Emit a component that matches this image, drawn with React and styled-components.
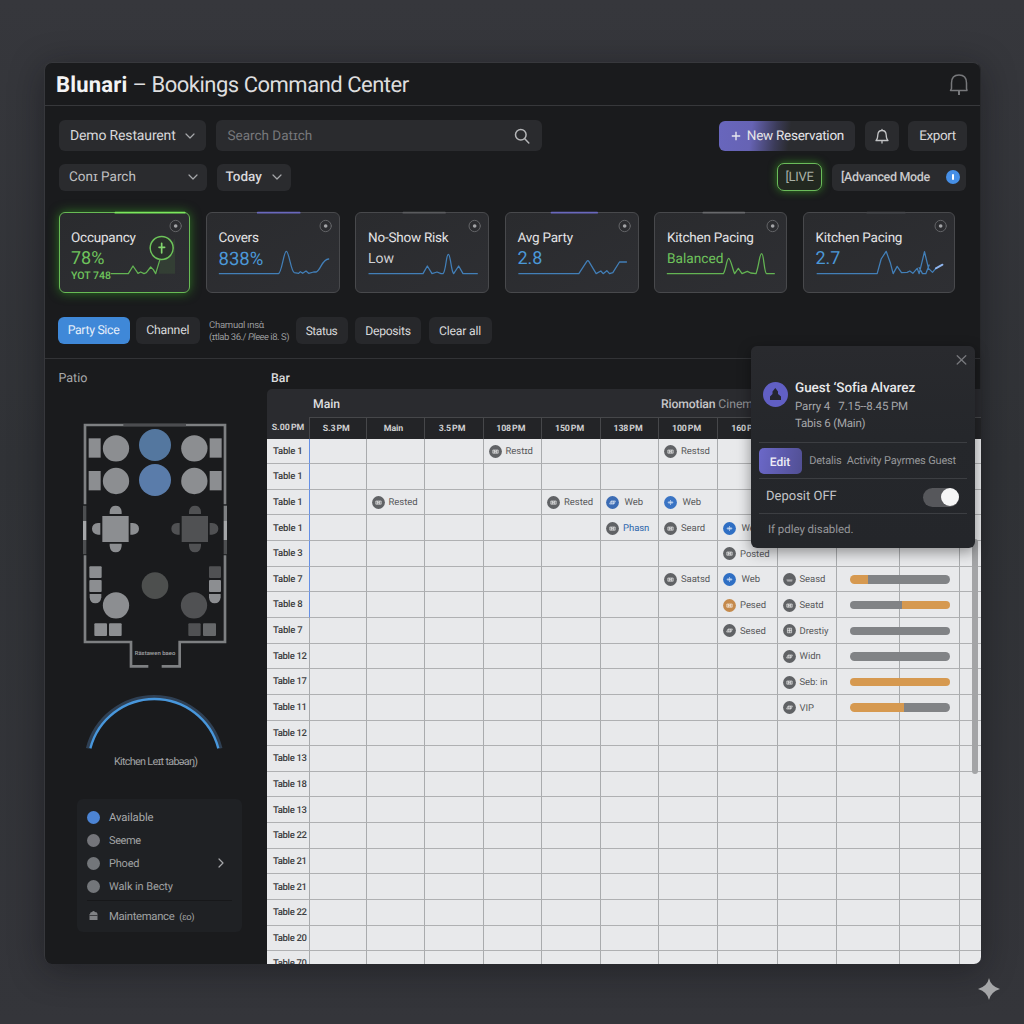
import React from "react";
import styled, { createGlobalStyle, css } from "styled-components";

const Global = createGlobalStyle`
  *, *::before, *::after { box-sizing: border-box; }
  body {
    margin: 0;
    background: linear-gradient(180deg, #36373c 0%, #303236 45%, #34353a 100%);
    font-family: Roboto, "Liberation Sans", sans-serif;
    color: #e6e6e8;
    text-rendering: geometricPrecision;
    -webkit-font-smoothing: antialiased;
  }
  button { text-rendering: inherit; }
`;

const Page = styled.main`
  width: 1024px;
  height: 1024px;
  padding: 62px 43px 60px 44px;
  position: relative;
  overflow: hidden;
`;

const Window = styled.section`
  position: relative;
  width: 937px;
  height: 902px;
  display: flex;
  flex-direction: column;
  background: #1a1b1d;
  border: 1px solid #37383c;
  border-bottom: 0;
  border-right-color: #27282b;
  border-radius: 8px;
  box-shadow: 0 6px 34px rgba(12, 13, 16, 0.42);
`;

const Label = styled.span`
  font-size: ${(p) => p.$size || 14}px;
  font-weight: ${(p) => p.$weight || 400};
  color: ${(p) => p.$color || "#d8d8da"};
  letter-spacing: ${(p) => p.$track || 0}px;
  line-height: 1.2;
  white-space: pre;
`;

const TitleBar = styled.header`
  flex: none;
  height: 43px;
  display: flex;
  align-items: center;
  justify-content: space-between;
  padding: 0 11px 0 11px;
  border-bottom: 1px solid #37383b;
  svg { margin-top: 2px; }
`;

const Title = styled.h1`
  margin: 0;
  padding-top: 3px;
  font-size: 22px;
  font-weight: 400;
  line-height: 28px;
  letter-spacing: ${(p) => p.$track || 0}px;
  color: #dededf;
  white-space: pre;
  b { font-weight: 700; color: #f3f3f4; letter-spacing: 0.2px; }
`;

const Toolbar = styled.div`
  flex: none;
  display: flex;
  justify-content: space-between;
  align-items: center;
  height: ${(p) => p.$h}px;
  margin-top: ${(p) => p.$top}px;
  padding: 0 ${(p) => p.$right}px 0 14px;
`;

const Group = styled.div`
  display: flex;
  align-items: center;
  gap: ${(p) => p.$gap || 9.5}px;
`;

const Control = styled.div`
  display: flex;
  align-items: center;
  justify-content: ${(p) => (p.$center ? "center" : "space-between")};
  width: ${(p) => p.$w}px;
  height: ${(p) => p.$h || 31}px;
  padding: ${(p) => p.$pad || "0 11px"};
  border-radius: 6px;
  background: #2a2b2e;
  ${Label} { padding-top: 1px; }
  ${(p) =>
    p.$primary &&
    css`
      background: linear-gradient(97deg, #6866bd 0%, #6663b4 24%, #3b3b58 42%, #2b2c30 52%, #2b2c30 100%);
    `}
`;

const LiveBadge = styled.div`
  display: flex;
  align-items: center;
  justify-content: center;
  width: 45px;
  height: 28px;
  padding-top: 1px;
  border: 1.5px solid #6bbb5b;
  border-radius: 7px;
  background: #222820;
  box-shadow: 0 0 9px rgba(70, 190, 40, 0.6);
`;

const InfoDot = styled.span`
  display: flex;
  align-items: center;
  justify-content: center;
  width: 14px;
  height: 14px;
  border-radius: 50%;
  background: #468fe6;
  &::after { content: ""; width: 2px; height: 6px; border-radius: 1px; background: #fff; }
`;

const Cards = styled.div`
  flex: none;
  display: grid;
  grid-template-columns: 131px 134px 134px 134px 133px 152px;
  gap: 15.5px;
  margin: 21px 0 0 14px;
  height: 80.5px;
`;

const Card = styled.article`
  position: relative;
  display: flex;
  flex-direction: column;
  align-items: flex-start;
  padding: 17px 11px 0 12px;
  border: 1px solid #48494c;
  border-radius: 6px;
  background: linear-gradient(150deg, #2a2b2e, #2e2f33);
  ${(p) =>
    p.$active &&
    css`
      border: 1.5px solid #68bb55;
      box-shadow: 0 0 11px rgba(60, 175, 40, 0.6);
      padding: 17px 10.5px 0 11px;
    `}
`;

const CardTitle = styled(Label)`
  line-height: 17px;
`;

const CardValue = styled(Label)`
  line-height: 22px;
  margin-top: 1px;
`;

const CardNote = styled(Label)`
  line-height: 12px;
  margin-top: 0;
`;

const CardArt = styled.svg`
  position: absolute;
  left: -1px;
  top: -1px;
  width: ${(p) => p.$w}px;
  height: 81px;
  overflow: visible;
`;

const Filters = styled.div`
  flex: none;
  display: flex;
  align-items: center;
  height: 27px;
  margin: 24.5px 0 0 12.5px;
`;

const Chip = styled.button`
  flex: none;
  display: flex;
  align-items: center;
  justify-content: center;
  width: ${(p) => p.$w}px;
  height: 27px;
  margin: 0 ${(p) => p.$gap || 0}px 0 0;
  padding: 1px 0 0;
  border: 0;
  border-radius: 6px;
  font: inherit;
  background: ${(p) => (p.$on ? "#3f88d8" : "#27282b")};
`;

const FilterNote = styled.div`
  flex: none;
  display: flex;
  flex-direction: column;
  width: 86.5px;
  padding-top: 2px;
  gap: 1px;
`;

const Body = styled.div`
  flex: 1;
  min-height: 0;
  margin-top: 14px;
  display: flex;
  border-top: 1px solid #323336;
`;

const Sidebar = styled.aside`
  width: 222px;
  flex: none;
  display: flex;
  flex-direction: column;
`;

const AreaLabel = styled(Label)`
  margin: 12px 0 0 ${(p) => p.$left}px;
  line-height: 16px;
`;

const FloorMap = styled.svg`
  width: 170px;
  height: 265px;
  margin: 23px 0 0 25px;
  flex: none;
`;

const Gauge = styled.svg`
  width: 148px;
  height: 60px;
  margin: 15px 0 0 35px;
  flex: none;
`;

const GaugeLabel = styled(Label)`
  margin: 4px 0 0 69px;
  line-height: 15px;
`;

const Legend = styled.div`
  width: 165px;
  height: 133px;
  margin: 30px 0 0 32px;
  padding: 6.5px 10px 0;
  border-radius: 6px;
  background: #1f2124;
`;

const LegendRow = styled.div`
  display: flex;
  align-items: center;
  height: 23px;
  gap: 9px;
  padding-right: 6px;
  ${Label} { padding-top: 2px; }
  ${(p) =>
    p.$last &&
    css`
      margin-top: 2px;
      height: 31px;
      border-top: 1px solid #17181a;
    `}
  svg.end { margin-left: auto; }
`;

const Dot = styled.i`
  width: 13px;
  height: 13px;
  border-radius: 50%;
  background: ${(p) => p.$color};
`;

const Timeline = styled.div`
  width: 714px;
  flex: none;
  display: flex;
  flex-direction: column;
  position: relative;
`;

const columns = "43px 56.5px 58px 59px 58.5px 59px 58px 59px 59.5px 59.5px 63px 60px 21px";

const ZoneBar = styled.div`
  flex: none;
  display: flex;
  align-items: center;
  height: 28px;
  margin-top: 2px;
  padding: 3px 0 0 46px;
  background: #2a2b2f;
  border-radius: 5px 0 0 0;
`;

const ZoneName = styled(Label)`
  width: ${(p) => (p.$w ? `${p.$w}px` : "auto")};
`;

const HeadRow = styled.div`
  flex: none;
  display: grid;
  grid-template-columns: ${columns};
  height: 21.5px;
  background: #2a2b2f;
`;

const HeadCell = styled.div`
  display: flex;
  align-items: center;
  justify-content: center;
  padding-top: 2px;
  word-spacing: -1px;
  border-right: 1px solid #46474a;
  &:last-child { border-right: 0; }
  ${(p) =>
    !p.$first &&
    css`
      background: #232427;
      border-top: 1px solid #46474a;
      padding-right: 3px;
    `}
`;

const Sheet = styled.div`
  flex: 1;
  min-height: 0;
  overflow: hidden;
  background: #e8e9eb;
  border-radius: 0 0 7px 0;
`;

const Row = styled.div`
  display: grid;
  grid-template-columns: ${columns};
  height: 25.65px;
`;

const Cell = styled.div`
  display: flex;
  align-items: center;
  min-width: 0;
  padding-left: ${(p) => p.$pad || 5}px;
  padding-top: 1px;
  border-right: 1px solid ${(p) => (p.$now ? "#6590e6" : "#a9abad")};
  border-bottom: 1px solid #afb0b2;
  &:last-child { border-right: 0; }
`;

const Booking = styled.div`
  display: flex;
  align-items: center;
  flex: none;
  gap: ${(p) => p.$gap || 4}px;
  ${Label} { padding-top: 1px; }
`;

const Bar = styled.div`
  display: flex;
  flex: none;
  width: 100px;
  height: 8.5px;
  border-radius: 4.5px;
  overflow: hidden;
`;

const Segment = styled.span`
  width: ${(p) => p.$w}%;
  background: ${(p) => (p.$orange ? "#d69950" : "#818386")};
`;

const Scroll = styled.div`
  position: absolute;
  right: 3px;
  top: 180px;
  width: 6px;
  height: 235px;
  border-radius: 3px;
  background: #a3a4a6;
`;

const Popover = styled.div`
  position: absolute;
  left: 706px;
  top: 283px;
  width: 224px;
  height: 202px;
  border-radius: 6px;
  background: linear-gradient(180deg, #292a2e 0%, #25272b 45%, #24262a 100%);
  box-shadow: 0 4px 14px rgba(0, 0, 0, 0.4);
  padding: 8px 8px 0;
`;

const CloseRow = styled.div`
  display: flex;
  justify-content: flex-end;
  height: 13px;
`;

const Guest = styled.div`
  display: flex;
  height: 75px;
  padding: 11px 0 0 4px;
  gap: 7px;
  svg { margin-top: 4px; }
`;

const GuestLines = styled.div`
  display: flex;
  flex-direction: column;
`;

const Line = styled(Label)`
  line-height: ${(p) => p.$lh}px;
`;

const PopRow = styled.div`
  display: flex;
  align-items: center;
  height: ${(p) => p.$h}px;
  padding: ${(p) => p.$pad || 0};
  border-top: 1px solid #3c3e42;
  justify-content: space-between;
`;

const EditButton = styled.button`
  width: 43px;
  height: 26px;
  padding: 0 1px 0 0;
  border: 0;
  border-radius: 5px;
  font: inherit;
  background: linear-gradient(100deg, #6b68c9, #514f93);
`;

const Toggle = styled.span`
  display: flex;
  justify-content: flex-end;
  width: 36px;
  height: 19px;
  border-radius: 10px;
  background: #56575b;
  &::after { content: ""; width: 18px; height: 18px; margin: 0.5px; border-radius: 50%; background: #f5f5f6; }
`;

const Sparkle = styled.svg`
  position: absolute;
  left: 978px;
  top: 978px;
  width: 22px;
  height: 22px;
`;

const Chevron = ({ right }) => (
  <svg className={right ? "end" : ""} width="10" height="10" viewBox="0 0 10 10" fill="none" stroke="#a6a7aa" strokeWidth="1.2" strokeLinecap="round" strokeLinejoin="round">
    <path d={right ? "M3 1l4 4-4 4" : "M1 3l4 4 4-4"} />
  </svg>
);

const TokenIcon = ({ color = "#606265", variant = 0 }) => (
  <svg width="13" height="13" viewBox="0 0 13 13">
    <circle cx="6.5" cy="6.5" r="6.4" fill={color} />
    <g fill="#fff" fillOpacity=".2" stroke="#fff" strokeOpacity=".6" strokeWidth=".9" strokeLinejoin="round">
      {variant === 0 && <path d="M3.8 5h5.4v3.2H3.8zM5.4 5v3.2M7.4 5v3.2M5.4 6.6h2" />}
      {variant === 1 && <path d="M3.7 6.4h5.6M5.1 5v3M6.5 4v5M7.9 5v3" />}
      {variant === 2 && <path d="M4.4 4.2h4.2v4.6H4.4zM4.4 6.4h4.2M6.6 4.2v4.6" />}
      {variant === 3 && <path d="M3.5 7h6M4.2 8h5" />}
      {variant === 4 && <path d="M3.6 8L5 5h4.4L8 8zM5.8 5v3M7.4 5v3" />}
    </g>
  </svg>
);

const blue = "#2f6fc4";
const green = "#6fc45c";
const sky = "#4b98d8";

const cards = [
  {
    title: "Occupancy", value: "78%", note: "YOT 748", color: green, size: 18, x: 27, w: 131, active: true,
    accent: [196, 404, "#7be85c"],
    path: "M184 206H235L249 183L264 205L272 201L282 206L289 203L302 186L310 194L317 206L330 163",
  },
  {
    title: "Covers", value: "838%", color: sky, size: 18.5, x: 467, w: 134, accent: [622, 748, "#6a68bd"],
    path: "M507 206H684C694 206 700 139 708 139S722 200 732 203L745 205L750 200L757 205L767 198L775 205L790 201H798C812 194 815 163 835 162",
  },
  {
    title: "No-Show Risk", value: "Low", color: "#d0d0d3", size: 14, x: 30, w: 134, accent: [175, 300, "#5a5b5e"],
    path: "M72 206H234L247 183L261 206L276 201L288 206H294C303 200 303 148 310 148S318 200 326 206L341 183L354 206H397",
  },
  {
    title: "Avg Party", value: "2.8", color: sky, size: 18, x: 478.5, w: 134, accent: [618, 755, "#6a68bd"],
    path: "M520 206H700L724 169Q727 165 730 169L752 206L766 198L773 206L784 197L792 206L802 203L822 171H843",
  },
  {
    title: "Kitchen Pacing", value: "Balanced", color: green, size: 13.7, x: 42, w: 133, accent: [190, 313, "#68696c"],
    path: "M82 206H250C258 195 260 160 266 160S278 195 284 206L295 190L306 206L322 199L332 204L348 206C358 180 358 146 365 146S372 206 380 206H403",
  },
  {
    title: "Kitchen Pacing", value: "2.7", color: sky, size: 18, x: 487.5, w: 152, accent: [680, 793, "#45464a"],
    path: "M530 206H710L722 162L737 139L750 175L758 206L770 184L783 203L800 202L808 198L817 205L830 190L836 206L852 140L864 190L876 202L886 190M836 188L846 206H856L866 180",
    tail: "M886 190L906 179",
  },
];

const tableNames = [
  "Table 1", "Table 1", "Table 1", "Teble 1", "Table 3", "Table 7", "Table 8", "Table 7", "Table 12", "Table 17", "Table 11",
  "Table 12", "Table 13", "Table 18", "Table 13", "Table 22", "Table 21", "Table 21", "Table 22", "Table 20", "Table 70",
];

const bookings = {
  0: { 4: ["Restɪd"], 7: ["Restsd"] },
  2: { 2: ["Rested"], 5: ["Rested"], 6: ["Web", "#3c6cb4", 4], 7: ["Web", "#3a74c4", 1] },
  3: { 6: ["Phasn", undefined, 0, "#2c66ab"], 7: ["Seard"], 8: ["Web", blue, 1] },
  4: { 8: ["Posted"] },
  5: { 7: ["Saatsd"], 8: ["Web", blue, 1], 9: ["Seasd", undefined, 3] },
  6: { 8: ["Pesed", "#c58a4c", 0], 9: ["Seatd", undefined, 0] },
  7: { 8: ["Sesed", undefined, 4], 9: ["Drestiy", undefined, 2] },
  8: { 9: ["Widn", undefined, 4] },
  9: { 9: ["Seb: in"] },
  10: { 9: ["VIP", undefined, 4] },
};

const bars = {
  5: [[18, 1], [82, 0]],
  6: [[52, 0], [48, 1]],
  7: [[100, 0]],
  8: [[100, 0]],
  9: [[100, 1]],
  10: [[54, 1], [46, 0]],
};

const hours = ["S.00 PM", "S.3 PM", "Main", "3.5 PM", "108 PM", "150 PM", "138 PM", "100 PM", "160 PM", "", "", "", ""];

function StatCard({ card }) {
  const right = card.x + card.w * 3;
  return (
    <Card $active={card.active}>
      <CardArt $w={card.w} viewBox={`${card.x} 21 ${card.w * 3} 243`} fill="none" strokeLinecap="round" strokeLinejoin="round">
        <path d={`M${card.accent[0]} 23H${card.accent[1]}`} stroke={card.accent[2]} strokeWidth="5" />
        <circle cx={right - 43} cy="63" r="17" stroke="#626366" strokeWidth="3" />
        <circle cx={right - 43} cy="63" r="5.5" fill="#a4a5a8" />
        {card.active && (
          <g>
            <path d="M330 165L375 100V206H326Z" fill="#5fb44c" fillOpacity=".12" />
            <circle cx="335" cy="129" r="34.5" stroke="#6dc35a" strokeWidth="4.5" fill="#2a302b" />
            <path d="M335 115V144M327 127H344" stroke="#82d46e" strokeWidth="5" />
          </g>
        )}
        <path d={card.path} stroke={card.color === green ? "#63b453" : "#427fb8"} strokeWidth="3.8" />
        {card.tail && <path d={card.tail} stroke="#8fb6f0" strokeWidth="5.5" />}
      </CardArt>
      <CardTitle $size={13.5} $track={-0.22} $color="#e3e3e5">{card.title}</CardTitle>
      <CardValue $size={card.size} $color={card.color}>{card.value}</CardValue>
      {card.note && <CardNote $size={10.5} $weight={500} $color={green}>{card.note}</CardNote>}
    </Card>
  );
}

const FloorPlan = () => {
  const light = "#8c8e91";
  const dark = "#505153";
  return (
    <FloorMap viewBox="0 0 510 795" fill="none">
      <g stroke="#7e8082" strokeWidth="8">
        <path d="M45 283V45H465V283M45 436V696H183V769H235M465 436V696H329V769H275" />
        <path d="M160 45H348" stroke="#4c4d50" />
        <path d="M44 287V333M44 390V433M466 390V433" stroke="#4d4f51" strokeWidth="10" />
        <path d="M44 333V390M466 333V390" stroke="#a4a6a8" strokeWidth="10" />
        <path d="M466 287V333" stroke="#7e8082" strokeWidth="10" />
      </g>
      <g fill={light}>
        <rect x="56" y="85" width="36" height="58" /><rect x="56" y="183" width="36" height="58" />
        <rect x="419" y="85" width="36" height="58" /><rect x="419" y="183" width="36" height="58" />
        <circle cx="138" cy="115" r="39.5" /><circle cx="138" cy="213" r="39.5" />
        <circle cx="373" cy="115" r="39.5" /><circle cx="373" cy="213" r="39.5" />
        <rect x="97" y="318" width="79" height="78" />
        <path d="M119 312V305Q121 287 137 287T155 305V312ZM119 401H155V408Q153 427 137 427T119 408ZM91 339V374H84Q66 372 66 356.500T84 339ZM181 339H188Q207 341 207 356.500T188 374H181Z" />
        <rect x="58" y="469" width="37" height="35" rx="3" /><rect x="58" y="510" width="37" height="36" rx="3" />
        <path d="M59 552H94V562Q92 580 76 580T59 562Z" />
        <circle cx="138" cy="586" r="39.5" />
        <rect x="73" y="640" width="38" height="38" rx="3" /><rect x="117" y="640" width="38" height="38" rx="3" />
        <rect x="417" y="510" width="36" height="36" rx="3" />
        <path d="M417 552H452V562Q450 580 434 580T417 562Z" />
      </g>
      <circle cx="255" cy="105" r="48" fill="#54779f" />
      <circle cx="255" cy="210" r="48" fill="#5a7caa" />
      <g fill={dark}>
        <rect x="335" y="318" width="79" height="78" />
        <path transform="translate(238 0)" d="M119 312V305Q121 287 137 287T155 305V312ZM119 401H155V408Q153 427 137 427T119 408ZM91 339V374H84Q66 372 66 356.500T84 339ZM181 339H188Q207 341 207 356.500T188 374H181Z" />
        <circle cx="255" cy="527" r="40" fill="#4d4f4e" />
        <circle cx="372" cy="586" r="39.5" />
        <rect x="417" y="469" width="36" height="35" rx="3" />
        <rect x="355" y="640" width="37" height="38" rx="3" />
        <rect x="399" y="640" width="39" height="38" rx="3" fill="#66686a" />
      </g>
      <text x="194" y="735" fontSize="17" fontWeight="500" fill="#a2a3a5" textLength="122" lengthAdjust="spacingAndGlyphs">Rästawen baeo</text>
    </FloorMap>
  );
};

export default function App() {
  return (
    <>
      <Global />
      <Page>
        <Window>
          <TitleBar>
            <Title $track={-0.49}><b>Blunari</b> – Bookings Command Center</Title>
            <svg width="20" height="24" viewBox="0 0 20 24" fill="none" stroke="#77787b" strokeWidth="1.5" strokeLinejoin="round">
              <path d="M1.500 17.500L2.500 15.500V10C2.500 5 5 2 10 2S17.500 5 17.500 10V15.500L18 17.500Z" />
              <path d="M10 18V22" strokeWidth="2" />
            </svg>
          </TitleBar>

          <Toolbar $h={31} $top={14} $right={13}>
            <Group>
              <Control $w={147}><Label $size={14} $track={-0.15}>Demo Restaurent</Label><Chevron /></Control>
              <Control $w={326} $pad="0 12px 0 12px">
                <Label $size={13.5} $color="#77787b">Search Datɪch</Label>
                <svg width="16" height="16" viewBox="0 0 16 16" fill="none" stroke="#b5b6b8" strokeWidth="1.500" strokeLinecap="round">
                  <circle cx="6.800" cy="6.800" r="5.300" /><path d="M10.800 10.800L14.800 15" />
                </svg>
              </Control>
            </Group>
            <Group>
              <Control $w={136} $h={30} $primary $pad="0 11px 0 12px">
                <svg width="10" height="10" viewBox="0 0 10 10" stroke="#e6e6ee" strokeWidth="1.400"><path d="M5 .8V9.200M.8 5H9.200" /></svg>
                <Label $size={13.5} $track={-0.27} $color="#e4e4e8">New Reservation</Label>
              </Control>
              <Control $w={34} $h={30} $center $pad="0">
                <svg width="16" height="16" viewBox="0 0 16 16" fill="none" stroke="#c2c3c5" strokeWidth="1.300" strokeLinejoin="round" strokeLinecap="round">
                  <path d="M2 12.500H14C12.600 11.500 12.300 10 12.200 7C12.100 4.200 10.500 2.500 8 2.500S3.900 4.200 3.800 7C3.700 10 3.400 11.500 2 12.500ZM8 1.300V2.400M8 12.700V15" />
                </svg>
              </Control>
              <Control $w={59} $h={30} $center $pad="0"><Label $size={13.5} $track={-0.4}>Export</Label></Control>
            </Group>
          </Toolbar>

          <Toolbar $h={28} $top={12} $right={14}>
            <Group>
              <Control $w={148} $h={27} $pad="0 9px 0 10px"><Label $size={13.5} $color="#c0c0c2">Conɪ Parch</Label><Chevron /></Control>
              <Control $w={74} $h={27} $pad="0 9px 0 9px"><Label $size={13.5} $weight={500}>Today</Label><Chevron /></Control>
            </Group>
            <Group>
              <LiveBadge><Label $size={13} $track={-0.3} $color="#a8b0a6">[LIVE</Label></LiveBadge>
              <Control $w={134.5} $h={27} $pad="0 6px 0 9.5px"><Label $size={12.5} $track={-0.35} $weight={500} $color="#c9c9cb">[Advanced Mode</Label><InfoDot /></Control>
            </Group>
          </Toolbar>

          <Cards>
            {cards.map((card, i) => <StatCard key={i} card={card} />)}
          </Cards>

          <Filters>
            <Chip $w={72} $gap={6.5} $on><Label $size={12.3} $track={-0.33} $color="#e5eefa">Party Sice</Label></Chip>
            <Chip $w={63.5} $gap={9.5}><Label $size={12.3} $track={-0.25}>Channel</Label></Chip>
            <FilterNote>
              <Label $size={9.5} $color="#98999b" $track={-0.25}>Chamuɑl ınsὰ</Label>
              <Label $size={9.5} $color="#98999b" $track={-0.45}>(ɪtlab 36./ <i>Pleee</i> i8. S)</Label>
            </FilterNote>
            <Chip $w={52} $gap={7.5}><Label $size={12} $track={-0.45}>Status</Label></Chip>
            <Chip $w={66} $gap={7.5}><Label $size={12.2} $track={-0.3}>Deposits</Label></Chip>
            <Chip $w={63}><Label $size={12.2} $track={-0.2}>Clear all</Label></Chip>
          </Filters>

          <Body>
            <Sidebar>
              <AreaLabel $left={13.5} $size={12.5} $color="#a9aaac">Patio</AreaLabel>
              <FloorPlan />
              <Gauge viewBox="105 60 444 180" fill="none">
                <path d="M128 235A206 206 0 0 1 527 235" stroke="#2f4054" strokeWidth="11" />
                <path d="M136 235A198.500 198.500 0 0 1 520 235" stroke="#4897dc" strokeWidth="7" />
              </Gauge>
              <GaugeLabel $size={10.8} $track={-0.7} $color="#a2a3a5">Kitchen Leɪt tabəaŋ)</GaugeLabel>
              <Legend>
                <LegendRow><Dot $color="#4c84d4" /><Label $size={11.3} $track={-0.1} $color="#a8a9ab">Available</Label></LegendRow>
                <LegendRow><Dot $color="#74757a" /><Label $size={11} $track={-0.4} $color="#a0a1a3">Seeme</Label></LegendRow>
                <LegendRow><Dot $color="#73767a" /><Label $size={11} $track={-0.2} $color="#a0a1a3">Phoed</Label><Chevron right /></LegendRow>
                <LegendRow><Dot $color="#73767a" /><Label $size={11} $track={-0.1} $color="#a0a1a3">Walk in Becty</Label></LegendRow>
                <LegendRow $last>
                  <svg width="13" height="11" viewBox="0 0 13 11" fill="#808285"><path d="M3 4Q3 2 5 2Q6.500 0 8 2Q10.500 2 10.500 4V10H2.500V4Z" /><path d="M2.500 5.500H10.500" stroke="#1f2124" strokeWidth=".7" /></svg>
                  <Label $size={11.3} $track={-0.32} $color="#a0a1a3">Maintemance  <small>(ɛo)</small></Label>
                </LegendRow>
              </Legend>
            </Sidebar>

            <Timeline>
              <AreaLabel $left={4} $size={12.3} $weight={500} $color="#dcdcde">Bar</AreaLabel>
              <ZoneBar>
                <ZoneName $w={348} $size={12.2} $weight={500} $color="#dededf">Main</ZoneName>
                <ZoneName $size={12.2} $track={-0.15} $weight={500} $color="#c6c6c8">Riomotian </ZoneName>
                <ZoneName $size={12.2} $color="#8f9093">Cinem</ZoneName>
              </ZoneBar>
              <HeadRow>
                {hours.map((h, i) => (
                  <HeadCell key={i} $first={i === 0}><Label $size={8.8} $weight={700} $track={i ? -0.1 : 0} $color="#cfcfd1">{h}</Label></HeadCell>
                ))}
              </HeadRow>
              <Sheet>
                {tableNames.map((name, r) => (
                  <Row key={r}>
                    <Cell $now={r < 7} $pad={6}><Label $size={9.5} $track={name.length > 7 ? -0.35 : -0.2} $weight={500} $color="#3d3e40">{name}</Label></Cell>
                    {hours.slice(1).map((_, k) => {
                      const c = k + 1;
                      const b = bookings[r] && bookings[r][c];
                      const bar = c === 10 && bars[r];
                      return (
                        <Cell key={c} $pad={bar ? 13 : 5}>
                          {b && (
                            <Booking $gap={b[0] === "Web" ? 5.5 : 4}>
                              <TokenIcon color={b[1]} variant={b[2]} />
                              <Label $size={9.5} $track={-0.05} $color={b[3] || "#58595b"}>{b[0]}</Label>
                            </Booking>
                          )}
                          {bar && <Bar>{bar.map(([w, o], n) => <Segment key={n} $w={w} $orange={o} />)}</Bar>}
                        </Cell>
                      );
                    })}
                  </Row>
                ))}
              </Sheet>
              <Scroll />
            </Timeline>
          </Body>

          <Popover>
            <CloseRow>
              <svg width="11" height="11" viewBox="0 0 11 11" stroke="#77787c" strokeWidth="1.300" strokeLinecap="round"><path d="M1.200 1.800L9.800 10M9.800 1.800L1.200 10" /></svg>
            </CloseRow>
            <Guest>
              <svg width="25" height="25" viewBox="0 0 25 25">
                <circle cx="12.500" cy="12.500" r="12.500" fill="#615fc4" />
                <path d="M12.300 6L15 9.500V12L18 14.500V18H7V14.500L9.500 12V9.500Z" fill="#25262f" />
              </svg>
              <GuestLines>
                <Line $lh={20} $size={13.5} $weight={500} $track={-0.05} $color="#e8e8ea">Guest ‘Sofia Alvarez</Line>
                <Line $lh={17} $size={11.5} $track={-0.13} $color="#a5a6a9">Parry 4   7.15--8.45 PM</Line>
                <Line $lh={16} $size={11.5} $track={-0.2} $color="#a5a6a9">Tabis 6 (Main)</Line>
              </GuestLines>
            </Guest>
            <PopRow $h={36} $pad="0 11px 0 0">
              <EditButton><Label $size={12} $weight={500} $color="#ededf6">Edit</Label></EditButton>
              <Label $size={11} $track={-0.17} $color="#96979a">Detalis  Activity Payrmes Guest</Label>
            </PopRow>
            <PopRow $h={35} $pad="2px 8px 0 7px">
              <Label $size={13} $color="#c4c5c8">Deposit OFF</Label>
              <Toggle />
            </PopRow>
            <PopRow $h={34} $pad="0 0 1px 9px">
              <Label $size={11.5} $track={-0.05} $color="#96979a">If pdley disabled.</Label>
            </PopRow>
          </Popover>
        </Window>
        <Sparkle viewBox="0 0 22 22"><path d="M11 0Q12.500 8 22 11Q12.500 14 11 22Q9.500 14 0 11Q9.500 8 11 0Z" fill="#a5a6a8" /></Sparkle>
      </Page>
    </>
  );
}
